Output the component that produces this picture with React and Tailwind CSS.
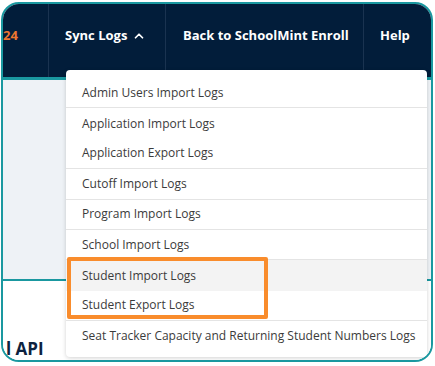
import { ChevronUp } from "lucide-react"

const items = [
  { label: "Admin Users Import Logs", divider: true },
  { label: "Application Import Logs" },
  { label: "Application Export Logs", divider: true },
  { label: "Cutoff Import Logs", divider: true },
  { label: "Program Import Logs", divider: true },
  { label: "School Import Logs", divider: true },
  { label: "Student Import Logs", active: true },
  { label: "Student Export Logs", divider: true },
  { label: "Seat Tracker Capacity and Returning Student Numbers Logs" },
]

function SyncLogsMenu() {
  return (
    <div className="absolute left-[63px] top-[66px] w-[361px] rounded-[4px] bg-white pt-[8px] pb-[5px] shadow-[0_1px_4px_rgba(0,0,0,0.18)]">
      {items.map((item) => (
        <div
          key={item.label}
          className={`flex h-[30.4px] items-center whitespace-nowrap pl-4 text-[12px] text-[#3b3b3b] ${
            item.divider ? "border-b border-[#e4e4e4]" : ""
          } ${item.active ? "bg-[#f3f3f3]" : ""}`}
        >
          {item.label}
        </div>
      ))}
    </div>
  )
}

export default function App() {
  return (
    <div className="h-[366px] w-[435px] bg-white pl-[1px] pt-[2px] font-['Open_Sans',sans-serif]">
      <div className="relative flex h-[360px] w-[432px] flex-col overflow-hidden rounded-[18px] border-2 border-[#1a98a0]">
        {/* top nav */}
        <div className="flex h-[73px] shrink-0 bg-[#021d3a] text-[13px] font-bold text-white">
          <div className="flex w-[46px] items-center border-r border-[#1a3350]">
            <span className="mb-[9px] text-[#ec7630]">24</span>
          </div>
          <div className="flex w-[117px] items-center border-r border-[#1a3350] pl-4">
            <span className="mb-[9px] flex items-center gap-[5px]">
              Sync Logs
              <ChevronUp size={14} strokeWidth={3} />
            </span>
          </div>
          <div className="flex w-[198px] items-center border-r border-[#1a3350] pl-[17px]">
            <span className="mb-[9px]">Back to SchoolMint Enroll</span>
          </div>
          <div className="flex flex-1 items-center pl-4">
            <span className="mb-[9px]">Help</span>
          </div>
        </div>
        <div className="h-[3px] shrink-0 bg-[#1a98a0]" />
        <div className="h-[199px] shrink-0 bg-[#eef2f6]" />
        <div className="h-[2px] shrink-0 bg-[#1a98a0]" />
        <div className="flex-1 bg-white pl-[3px] pt-[56px]">
          <span className="text-[17px] leading-[24px] font-bold text-[#0d2240]">l API</span>
        </div>

        <SyncLogsMenu />

        {/* highlight box */}
        <div className="absolute left-[64px] top-[253px] h-[62px] w-[201px] rounded-[2px] border-4 border-[#f98c2c]" />
      </div>
    </div>
  )
}
